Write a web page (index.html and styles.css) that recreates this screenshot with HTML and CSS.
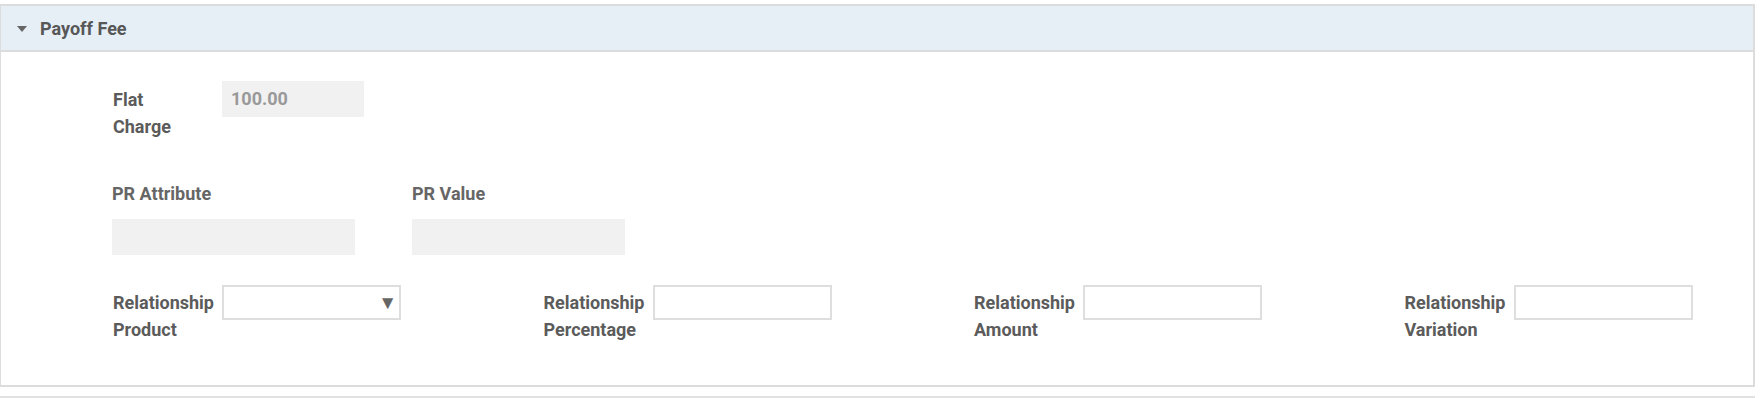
FILE: index.html
```html
<!DOCTYPE html>
<html lang="en">
<head>
    <meta charset="UTF-8">
    <title>Payoff Fee</title>
    <link rel="stylesheet" href="styles.css">
</head>
<body>
    <div class="panel">
        <div class="panel-header">
            <span class="caret"></span>
            <span class="panel-title">Payoff Fee</span>
        </div>
        <div class="panel-body">
            <div class="field-row">
                <label class="field-label">Flat Charge</label>
                <div class="readonly flat">100.00</div>
            </div>

            <div class="pr-row">
                <div class="pr-field">
                    <div class="pr-label">PR Attribute</div>
                    <div class="readonly pr-attr"></div>
                </div>
                <div class="pr-field">
                    <div class="pr-label">PR Value</div>
                    <div class="readonly pr-value"></div>
                </div>
            </div>

            <div class="rel-row">
                <div class="field-row">
                    <label class="field-label">Relationship Product</label>
                    <div class="text-input select">
                        <span class="select-arrow">&#9660;</span>
                    </div>
                </div>
                <div class="field-row">
                    <label class="field-label">Relationship Percentage</label>
                    <div class="text-input"></div>
                </div>
                <div class="field-row">
                    <label class="field-label">Relationship Amount</label>
                    <div class="text-input"></div>
                </div>
                <div class="field-row">
                    <label class="field-label">Relationship Variation</label>
                    <div class="text-input"></div>
                </div>
            </div>
        </div>
    </div>
    <div class="next-panel"></div>
</body>
</html>
```

FILE: styles.css
```css
body {
    margin: 0;
    font-family: Roboto, "Liberation Sans", sans-serif;
    color: #5b5b5b;
    background: #fff;
    overflow: hidden;
}
.panel {
    margin: 4px 5px 0 -1px;
    border: 2px solid #dcdcdc;
}
.panel-header {
    height: 44px;
    display: flex;
    align-items: center;
    padding-left: 16px;
    background: #e6eef6;
    border-bottom: 2px solid #dcdcdc;
}
.caret {
    width: 0;
    height: 0;
    border-left: 5px solid transparent;
    border-right: 5px solid transparent;
    border-top: 6px solid #666;
    margin-right: 13px;
    margin-top: 1px;
}
.panel-title {
    font-size: 18px;
    font-weight: bold;
    color: #575757;
}
.panel-body {
    height: 333px;
    box-sizing: border-box;
    padding: 29px 0 0 112px;
}
.field-row {
    display: flex;
    align-items: flex-start;
}
.field-label {
    width: 70px;
    margin-right: 39px;
    padding-top: 5px;
    font-size: 18px;
    font-weight: bold;
    line-height: 27px;
}
.readonly {
    background: #f1f1f1;
    height: 36px;
    box-sizing: border-box;
}
.flat {
    width: 142px;
    padding-left: 9px;
    font-size: 18px;
    font-weight: bold;
    line-height: 36px;
    color: #999;
}
.pr-row {
    display: flex;
    gap: 57px;
    margin-top: 40px;
    margin-left: -1px;
}
.pr-label {
    font-size: 18px;
    font-weight: bold;
    line-height: 27px;
    margin-bottom: 12px;
    color: #666;
}
.pr-attr {
    width: 243px;
}
.pr-value {
    width: 213px;
}
.rel-row {
    display: grid;
    grid-template-columns: repeat(4, 430.5px);
    margin-top: 30px;
}
.rel-row .field-label {
    padding-top: 4px;
}
.text-input {
    width: 179px;
    height: 35px;
    box-sizing: border-box;
    border: 2px solid #dedede;
    background: #fff;
}
.select {
    display: flex;
    justify-content: flex-end;
    align-items: center;
    padding-right: 2px;
}
.select-arrow {
    font-size: 19px;
    color: #666;
    line-height: 1;
}
.next-panel {
    margin: 9px 5px 0 -1px;
    border-top: 2px solid #e2e2e2;
}
```
